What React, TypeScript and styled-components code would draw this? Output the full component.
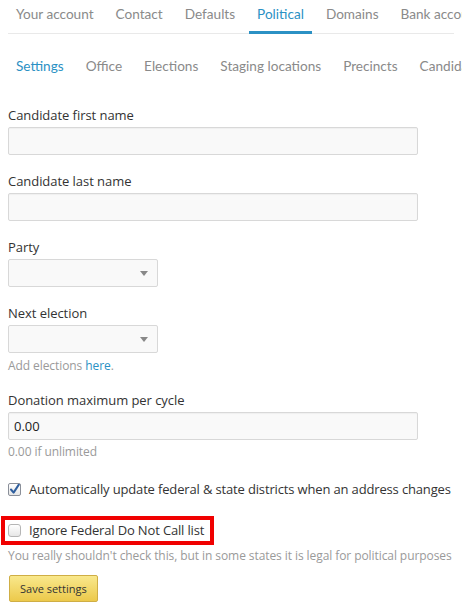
import React from 'react'
import styled, { createGlobalStyle } from 'styled-components'

const GlobalStyle = createGlobalStyle`
  body {
    margin: 0;
    background: #fff;
    font-family: 'Open Sans', 'Liberation Sans', sans-serif;
    color: #333;
  }
`

const Page = styled.div`
  padding: 0 8px;
  width: 462px;
  box-sizing: border-box;
  overflow: hidden;
`

const TabBar = styled.div`
  display: flex;
  border-bottom: 1px solid #e9e9e9;
  white-space: nowrap;
  font-family: Lato, 'Open Sans', sans-serif;
  font-size: 13.6px;
`

const Tab = styled.div<{ $active?: boolean }>`
  padding: 6px 8px 8px;
  margin: 0 6px -1px 0;
  line-height: 17px;
  color: ${p => (p.$active ? '#2b91c4' : '#8a8a8a')};
  border-bottom: 3px solid ${p => (p.$active ? '#2b91c4' : 'transparent')};
`

const SubTabBar = styled.div`
  display: flex;
  padding-top: 24px;
  white-space: nowrap;
  font-family: Lato, 'Open Sans', sans-serif;
  font-size: 13.6px;
`

const SubTab = styled.div<{ $active?: boolean }>`
  padding: 0 8px;
  margin-right: 6px;
  line-height: 17px;
  color: ${p => (p.$active ? '#2b91c4' : '#8a8a8a')};
`

const Form = styled.form`
  display: flex;
  flex-direction: column;
  padding-top: 31px;
`

const Group = styled.div`
  display: flex;
  flex-direction: column;
  align-items: flex-start;
  margin-bottom: 17px;
`

const Label = styled.label`
  font-size: 13px;
  line-height: 18px;
  color: #333;
  margin-bottom: 3px;
  letter-spacing: -0.05px;
`

const TextInput = styled.input`
  box-sizing: border-box;
  width: 410px;
  height: 28px;
  margin: 0;
  padding: 0 5px;
  border: 1px solid #d8d8d8;
  border-radius: 2px;
  background: #f9f9f9;
  box-shadow: inset 0 1px 1px rgba(0, 0, 0, 0.04);
  font-family: 'Open Sans', 'Liberation Sans', sans-serif;
  font-size: 13px;
  color: #222;
  outline: none;
`

const SelectBox = styled.div`
  position: relative;
  box-sizing: border-box;
  width: 150px;
  height: 28px;
  border: 1px solid #d8d8d8;
  border-radius: 2px;
  background: #f9f9f9;

  &::after {
    content: '';
    position: absolute;
    right: 9px;
    top: 11px;
    border-left: 4px solid transparent;
    border-right: 4px solid transparent;
    border-top: 5px solid #888;
  }
`

const Help = styled.div<{ $gap?: number }>`
  font-size: 12px;
  line-height: 16px;
  color: #9a9a9a;
  margin-top: ${p => p.$gap ?? 4}px;
  white-space: nowrap;
  letter-spacing: -0.08px;
`

const Link = styled.a`
  color: #2b91c4;
  text-decoration: none;
`

const CheckRow = styled.label`
  display: flex;
  align-items: center;
  gap: 8px;
  font-size: 13px;
  line-height: 18px;
  color: #333;
  white-space: nowrap;
  letter-spacing: -0.15px;
`

const Box = styled.span<{ $checked?: boolean }>`
  box-sizing: border-box;
  display: inline-flex;
  align-items: center;
  justify-content: center;
  width: 13px;
  height: 13px;
  flex: none;
  border: 1px solid ${p => (p.$checked ? '#8a8f99' : '#b5b5b5')};
  border-radius: ${p => (p.$checked ? '2px' : '3px')};
  background: linear-gradient(#ffffff, #e6e6e6);
`

const Highlight = styled.div`
  align-self: flex-start;
  margin: 18px 0 0 -7px;
  padding: 1px 6px 2px 3px;
  border: 4px solid #f00000;
`

const SaveButton = styled.button`
  align-self: flex-start;
  margin: 11px 0 0 1px;
  height: 27px;
  padding: 0 10px;
  border: 1px solid #cfae45;
  border-radius: 2px;
  background: linear-gradient(#f9e88c, #ecc94b);
  font-family: 'Open Sans', 'Liberation Sans', sans-serif;
  font-size: 11px;
  color: #333;
`

const Check = () => (
  <svg width="11" height="11" viewBox="0 0 11 11">
    <path d="M2 5.5 L4.6 8.6 L9.8 0.6" fill="none" stroke="#2f5f9e" strokeWidth="2" strokeLinecap="round" strokeLinejoin="round" />
  </svg>
)

const App = (): JSX.Element => {
  const tabs = ['Your account', 'Contact', 'Defaults', 'Political', 'Domains', 'Bank account']
  const subTabs = ['Settings', 'Office', 'Elections', 'Staging locations', 'Precincts', 'Candidates']
  return (
    <Page>
      <GlobalStyle />
      <TabBar>
        {tabs.map(t => (
          <Tab key={t} $active={t === 'Political'}>{t}</Tab>
        ))}
      </TabBar>
      <SubTabBar>
        {subTabs.map(t => (
          <SubTab key={t} $active={t === 'Settings'}>{t}</SubTab>
        ))}
      </SubTabBar>
      <Form onSubmit={e => e.preventDefault()}>
        <Group>
          <Label>Candidate first name</Label>
          <TextInput />
        </Group>
        <Group>
          <Label>Candidate last name</Label>
          <TextInput />
        </Group>
        <Group>
          <Label>Party</Label>
          <SelectBox />
        </Group>
        <Group>
          <Label>Next election</Label>
          <SelectBox />
          <Help $gap={5}>Add elections <Link href="#">here</Link>.</Help>
        </Group>
        <Group>
          <Label>Donation maximum per cycle</Label>
          <TextInput defaultValue="0.00" />
          <Help>0.00 if unlimited</Help>
        </Group>
        <CheckRow style={{ marginTop: 3 }}>
          <Box $checked><Check /></Box>
          Automatically update federal &amp; state districts when an address changes
        </CheckRow>
        <Highlight>
          <CheckRow>
            <Box />
            Ignore Federal Do Not Call list
          </CheckRow>
        </Highlight>
        <Help $gap={3}>You really shouldn't check this, but in some states it is legal for political purposes</Help>
        <SaveButton type="submit">Save settings</SaveButton>
      </Form>
    </Page>
  )
}

export default App
